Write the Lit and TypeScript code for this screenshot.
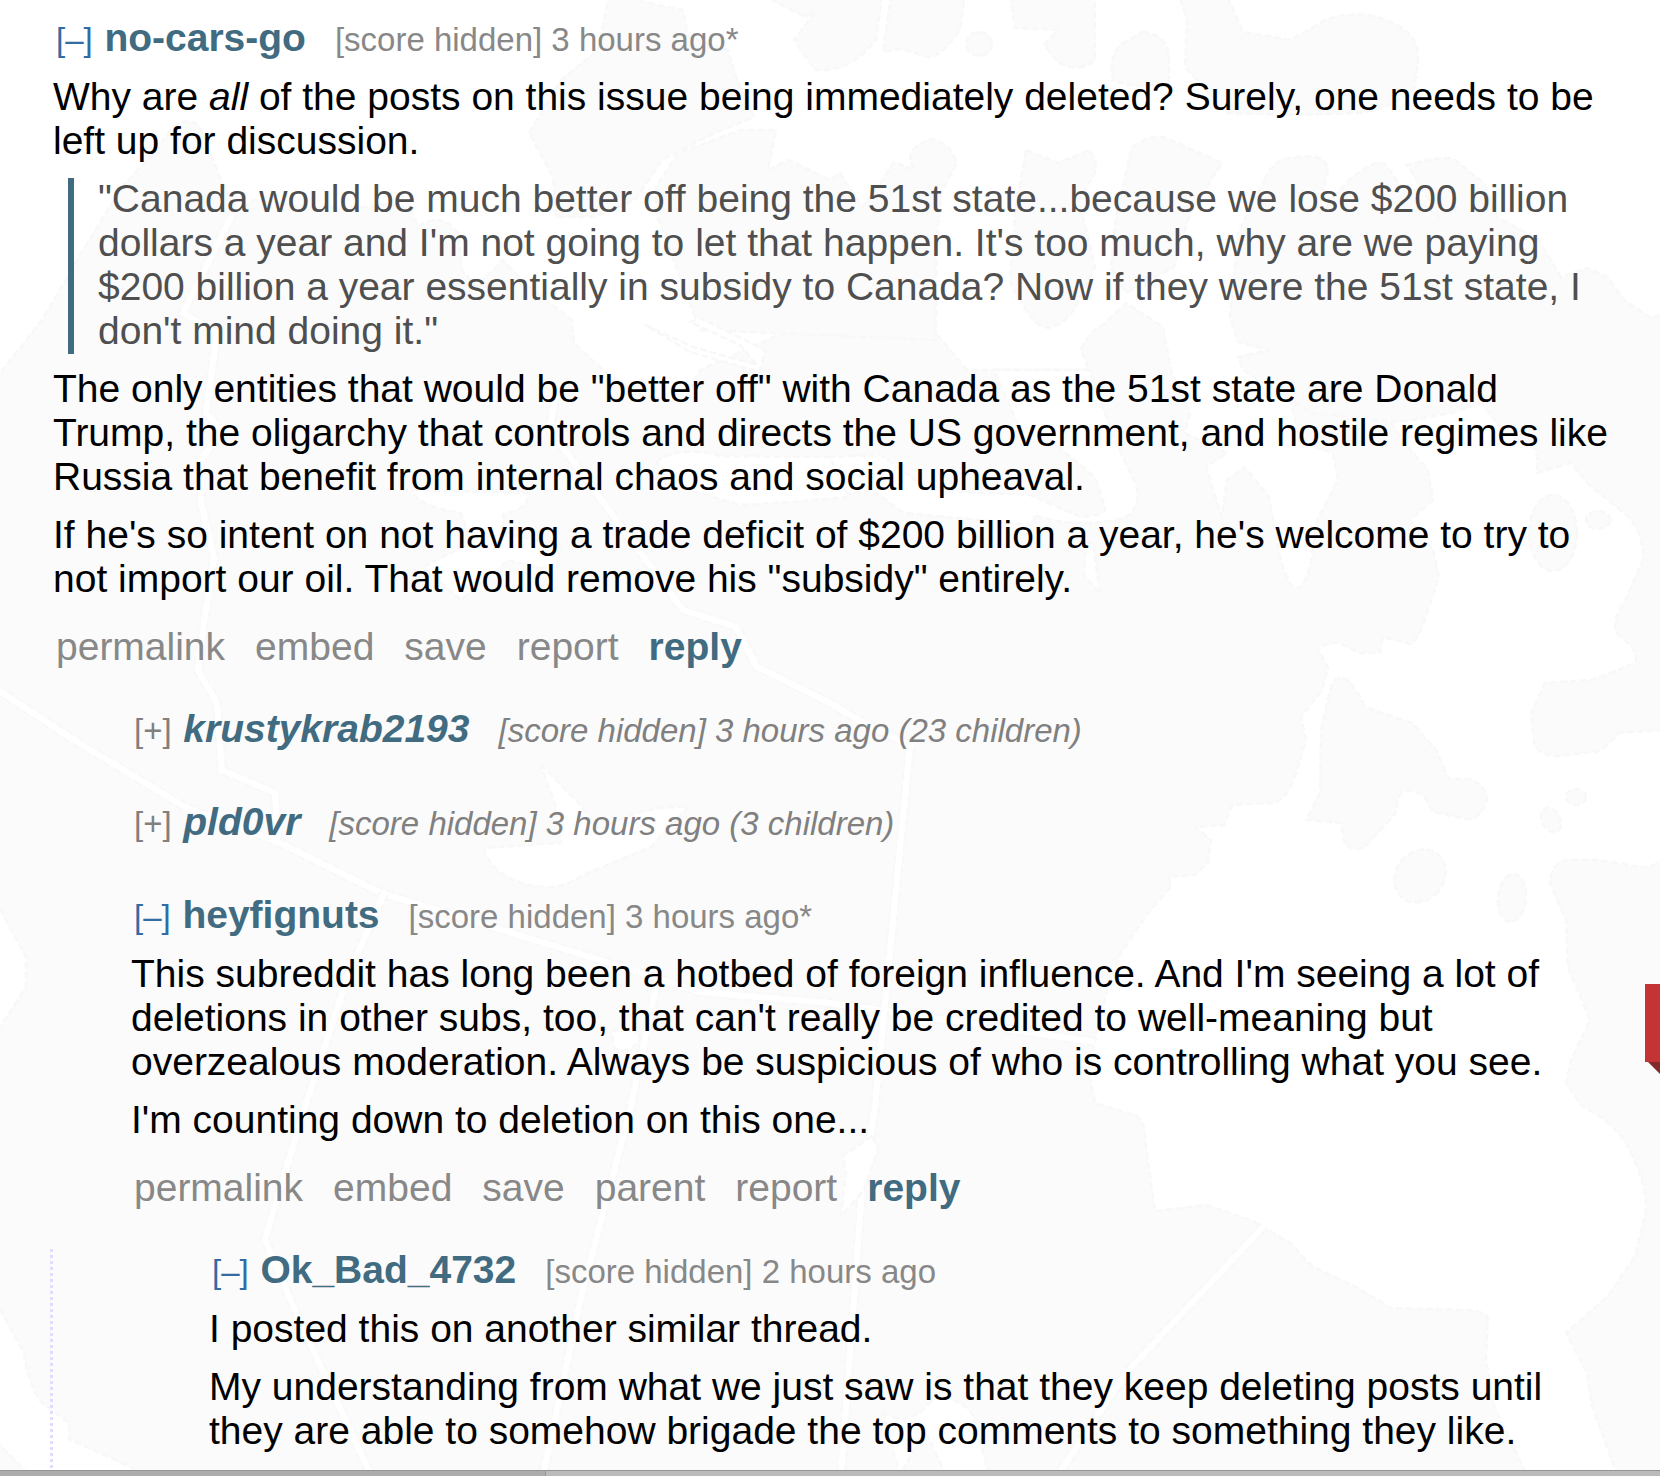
import {LitElement, html, css, svg, nothing} from 'lit';
import {customElement, property} from 'lit/decorators.js';

@customElement('map-backdrop')
export class MapBackdrop extends LitElement {
  static styles = css`
    :host {
      display: block;
    }

    svg {
      display: block;
    }

    .land {
      fill: #fbfbfb;
      stroke: #f8f8f8;
      stroke-width: 2.5;
      stroke-dasharray: 7 3;
      stroke-linejoin: round;
    }

    .water {
      fill: #ffffff;
      stroke: #f8f8f8;
      stroke-width: 2.5;
      stroke-dasharray: 7 3;
      stroke-linejoin: round;
    }

    .edge {
      fill: none;
      stroke: #f8f8f8;
      stroke-width: 10;
      stroke-dasharray: 7 5;
    }

    .border {
      fill: none;
      stroke: #ffffff;
      stroke-width: 6;
    }
  `;

  land = [
    // mainland
    'M-5 380L42 320L85 247L122 187L159 147Q178 112 199 125L220 177L238 212L254 200L312 207L365 207Q405 200 413 214L418 227Q440 210 458 233L462 270L476 287L503 260L529 287L572 320L574 343L603 370L640 395L683 403L700 370L790 330L936 333L967 370L1089 370L1081 350Q1086 335 1105 323L1126 303L1163 327L1171 370L1190 413L1185 433L1227 453L1206 467L1222 517L1227 480L1245 467L1269 497L1280 557Q1298 620 1312 557L1317 520L1338 480L1333 453L1301 443L1290 400L1312 413L1391 422L1402 440L1428 470L1433 500L1410 520L1433 550L1439 577L1428 610Q1415 650 1407 643L1383 637L1380 653L1359 653L1338 642L1317 647L1328 667L1322 690L1301 717L1306 740L1296 773Q1285 805 1269 803L1232 805L1224 825L1195 827L1211 840L1208 863L1195 875L1169 877L1171 887L1148 913L1121 953L1108 987L1095 1040L1089 1073L1095 1103L1137 1116Q1146 1125 1145 1139L1150 1176L1155 1211L1206 1205L1253 1221L1290 1243L1312 1266L1354 1286L1391 1308L1465 1310Q1485 1310 1488 1319L1486 1359L1494 1406L1529 1480L-5 1480Z',
    // eastern shore
    'M1665 857Q1655 868 1640 867L1598 860L1566 860Q1550 865 1550 883L1566 920L1568 967L1590 1020L1571 1060L1566 1083L1582 1106Q1618 1125 1629 1149Q1650 1190 1645 1216L1635 1256L1608 1296L1566 1333L1587 1373L1592 1406L1619 1480L1665 1480Z',
    // big eastern island
    'M1264 180Q1275 158 1291 158Q1328 152 1328 170L1318 215L1349 180Q1375 158 1385 164L1402 187L1439 217L1407 165Q1450 154 1455 160L1484 183L1497 217L1539 240L1561 277L1587 268L1608 277L1624 300L1651 318L1665 313L1665 730L1619 733Q1600 755 1592 752L1560 756Q1535 756 1534 740L1531 713L1545 683L1592 680L1635 663Q1640 650 1616 633Q1612 620 1624 603L1643 560Q1644 530 1624 513L1587 483L1571 463L1537 473L1537 450L1502 430L1481 403L1452 413L1400 422L1312 413L1243 370L1238 357L1269 350L1238 342L1230 317L1238 233Z',
    // north-western islands
    'M609 -5L683 10L688 37L728 50L738 83L754 117L715 133L662 160L635 200L593 217L556 217L553 177L529 133L561 80L598 50Z',
    'M656 213L656 187L678 153L741 130L776 130L768 170L789 160L830 180L840 173L862 207L878 187L894 162L915 170Q900 150 931 139Q950 142 957 163L941 193L936 253L936 340L700 330Z',
    'M762 -5L805 17L815 12L794 40L815 70Q840 72 862 55L876 40L882 -5Z',
    'M891 -5L965 -5L960 30Q940 58 928 57L900 49L883 52Z',
    'M1010 -5L1015 28L1058 30L1044 45L1058 62Q1080 74 1095 60L1095 -5Z',
    'M1142 32Q1170 35 1169 60L1169 80Q1140 92 1113 80Q1108 60 1120 45Z',
    'M1179 -5L1227 -5L1243 32L1291 40L1325 20Q1360 8 1391 22Q1420 35 1418 60L1415 87Q1390 110 1359 113L1296 115L1227 113L1185 67L1187 20Z',
    'M1026 150L1058 163L1089 150Q1098 160 1095 173L1079 200L1095 267L1074 310Q1047 345 1026 310L1010 283L1015 213Z',
    'M1132 147Q1150 135 1164 137L1222 163L1190 213L1174 267L1126 293L1111 267L1116 217Z',
    // islands in the bay
    'M1343 678Q1352 680 1365 707L1412 723L1436 750L1449 779L1470 779Q1486 785 1487 800Q1480 820 1468 819L1433 812L1424 796Q1402 783 1398 800L1396 813L1365 847Q1346 852 1344 840L1341 823L1306 820L1320 793L1321 730L1330 690Q1334 676 1343 678Z',
  ];

  islets = [
    {x: 979, y: 44, rx: 13, ry: 12, turn: 0},
    {x: 1553, y: 533, rx: 24, ry: 38, turn: 0},
    {x: 1598, y: 520, rx: 12, ry: 9, turn: 0},
    {x: 1420, y: 876, rx: 24, ry: 28, turn: 40},
    {x: 1512, y: 898, rx: 14, ry: 24, turn: 5},
    {x: 1576, y: 797, rx: 10, ry: 8, turn: 0},
    {x: 1551, y: 820, rx: 9, ry: 13, turn: -30},
  ];

  water = [
    'M994 370L1089 370L1116 443L1137 487Q1140 508 1126 517Q1080 530 1034 515L1034 525L904 513L872 490L830 497L830 457L880 455L930 490L1030 495L1080 517Q1108 515 1105 507L1095 477L1050 440L1026 443Z',
    'M1086 543L1093 543L1100 594L1084 575Z',
    'M656 462Q680 445 720 456L830 457L848 497L790 502L740 505L690 490Z',
    'M645 325L693 347L757 365L740 345L690 322L700 318L765 350L760 372L690 352Z',
    'M413 490L529 493Q528 510 503 514L503 532L561 547Q560 570 540 568L508 560L461 600L423 567L471 543L461 513Q413 505 413 490Z',
    'M540 763L556 807L561 843L484 848Q490 875 529 885Q556 890 570 882L588 873L651 847L688 807Q640 805 600 830L582 807Z',
    'M872 1136L843 1156L846 1173L841 1216L864 1190L878 1149Z',
    'M-5 900L26 957L26 987L-5 1035Z',
    'M-5 1300L24 1353Q28 1385 42 1403L69 1423L69 1439L148 1475L30 1475L-5 1440Z',
    'M883 1413L900 1420L920 1413L936 1396Q965 1400 973 1416L989 1475L946 1475L925 1430L900 1475Z',
    'M612 1032Q630 1020 640 1038Q632 1055 614 1048Z',
  ];

  borders = [
    'M233 213L183 313L217 333L206 413L222 430L201 460L201 503L214 557L204 623L198 670L217 703L222 770L275 793L278 840',
    'M-5 688L74 740L185 807L278 842L381 893L600 960L700 992L830 1003L1095 1042',
    'M556 390L550 430L609 510L683 610L736 627L757 667L830 703L862 722L910 745L875 1107L862 1189L841 1475',
    'M384 893L349 973L304 1110L265 1239L296 1313L371 1475',
    'M656 987L630 1110L582 1293L543 1475',
    'M1264 1226L1126 1373L1058 1475',
  ];

  render() {
    return html`
      <svg width="1660" height="1476" viewBox="0 0 1660 1476">
        ${this.land.map((d) => svg`<path class="land" d=${d} />`)}
        ${this.islets.map((i) => svg`
          <ellipse class="land" cx=${i.x} cy=${i.y} rx=${i.rx} ry=${i.ry}
            transform="rotate(${i.turn} ${i.x} ${i.y})" />`)}
        ${this.borders.map((d) => svg`<path class="edge" d=${d} /><path class="border" d=${d} />`)}
        ${this.water.map((d) => svg`<path class="water" d=${d} />`)}
      </svg>
    `;
  }
}

@customElement('comment-entry')
export class CommentEntry extends LitElement {
  static styles = css`
    :host {
      display: block;
    }

    .tagline {
      display: flex;
      align-items: baseline;
      height: 44px;
      padding-left: 3px;
      font-size: 33px;
      line-height: 44px;
      color: #888888;
      white-space: pre;
    }

    .toggle {
      margin-right: 11.7px;
      color: #336ba3;
    }

    .author {
      margin-right: 29px;
      font-size: 39px;
      font-weight: bold;
      color: #416b80;
    }

    .collapsed .toggle {
      color: #808080;
    }

    .collapsed .author,
    .collapsed .meta {
      font-style: italic;
    }

    .collapsed .meta {
      color: #808080;
    }

    .body {
      display: flex;
      flex-direction: column;
      gap: 14px;
      margin-top: 15px;
    }

    .buttons {
      display: flex;
      gap: 30px;
      margin-top: 24px;
      padding-left: 3px;
      color: #888888;
    }

    .reply {
      font-weight: bold;
      color: #416b80;
    }

    ::slotted(p) {
      margin: 0;
    }

    ::slotted(blockquote) {
      margin: 0 0 -1px 15px;
      padding: 0 0 1px 30px;
      background: linear-gradient(#416b80, #416b80) 0 1px / 6px 100% no-repeat;
      color: #4f4f4f;
    }
  `;

  @property() author = '';
  @property() meta = '';
  @property({type: Boolean}) collapsed = false;
  @property({attribute: false}) actions: string[] = [];

  render() {
    return html`
      <div class=${this.collapsed ? 'tagline collapsed' : 'tagline'}>
        <span class="toggle">${this.collapsed ? '[+]' : '[–]'}</span>
        <span class="author">${this.author}</span>
        <span class="meta">${this.meta}</span>
      </div>
      ${this.collapsed ? nothing : html`<div class="body"><slot></slot></div>`}
      ${this.actions.length
        ? html`
          <div class="buttons">
            ${this.actions.map((a) => html`<span class=${a === 'reply' ? 'reply' : ''}>${a}</span>`)}
          </div>`
        : nothing}
    `;
  }
}

@customElement('app-root')
export class AppRoot extends LitElement {
  static styles = css`
    :host {
      display: flex;
      flex-direction: column;
      position: relative;
      width: 1660px;
      height: 1476px;
      overflow: hidden;
      background: #ffffff;
      font-family: 'Liberation Sans', Arial, sans-serif;
      font-size: 39px;
      line-height: 44px;
      color: #000000;
    }

    .backdrop {
      position: absolute;
      inset: 0;
    }

    .thread {
      position: relative;
      flex: 1;
      min-height: 0;
      box-sizing: border-box;
      padding: 16px 42px 0 53px;
      overflow: hidden;
    }

    .children {
      display: flex;
      flex-direction: column;
      gap: 49px;
      margin-top: 38px;
      padding-left: 78px;
    }

    .nested {
      margin: -11px 0 0 -81px;
      padding-left: 159px;
      height: 222px;
      background: repeating-linear-gradient(#ddddff 0 3px, transparent 3px 6px) 0 1px / 3px 100% no-repeat;
    }

    .ribbon {
      position: absolute;
      top: 984px;
      right: 0;
      width: 15px;
      height: 78px;
      background: #c53434;
    }

    .fold {
      position: absolute;
      top: 1062px;
      right: 0;
      width: 12px;
      height: 12px;
      background: #812a2a;
      clip-path: polygon(0 0, 100% 0, 100% 100%);
    }

    .statusbar {
      display: flex;
      position: relative;
      flex: none;
      box-sizing: border-box;
      height: 6px;
      border-top: 1px solid #949494;
      background: #bbbbbb;
    }

    .progress {
      box-sizing: border-box;
      width: 546px;
      background: #adadad;
      border-right: 1px solid #999999;
    }
  `;

  render() {
    return html`
      <map-backdrop class="backdrop"></map-backdrop>
      <main class="thread">
        <comment-entry
          author="no-cars-go"
          meta="[score hidden] 3 hours ago*"
          .actions=${['permalink', 'embed', 'save', 'report', 'reply']}>
          <p>Why are <em>all</em> of the posts on this issue being immediately deleted? Surely, one needs to be left up for discussion.</p>
          <blockquote>"Canada would be much better off being the 51st state...because we lose $200 billion dollars a year and I'm not going to let that happen. It's too much, why are we paying $200 billion a year essentially in subsidy to Canada? Now if they were the 51st state, I don't mind doing it."</blockquote>
          <p>The only entities that would be "better off" with Canada as the 51st state are Donald Trump, the oligarchy that controls and directs the US government, and hostile regimes like Russia that benefit from internal chaos and social upheaval.</p>
          <p>If he's so intent on not having a trade deficit of $200 billion a year, he's welcome to try to not import our oil. That would remove his "subsidy" entirely.</p>
        </comment-entry>
        <div class="children">
          <comment-entry collapsed author="krustykrab2193" meta="[score hidden] 3 hours ago (23 children)"></comment-entry>
          <comment-entry collapsed author="pld0vr" meta="[score hidden] 3 hours ago (3 children)"></comment-entry>
          <comment-entry
            author="heyfignuts"
            meta="[score hidden] 3 hours ago*"
            .actions=${['permalink', 'embed', 'save', 'parent', 'report', 'reply']}>
            <p>This subreddit has long been a hotbed of foreign influence. And I'm seeing a lot of deletions in other subs, too, that can't really be credited to well-meaning but overzealous moderation. Always be suspicious of who is controlling what you see.</p>
            <p>I'm counting down to deletion on this one...</p>
          </comment-entry>
          <div class="nested">
            <comment-entry author="Ok_Bad_4732" meta="[score hidden] 2 hours ago">
              <p>I posted this on another similar thread.</p>
              <p>My understanding from what we just saw is that they keep deleting posts until they are able to somehow brigade the top comments to something they like.</p>
            </comment-entry>
          </div>
        </div>
      </main>
      <div class="ribbon"></div>
      <div class="fold"></div>
      <footer class="statusbar"><div class="progress"></div></footer>
    `;
  }
}
